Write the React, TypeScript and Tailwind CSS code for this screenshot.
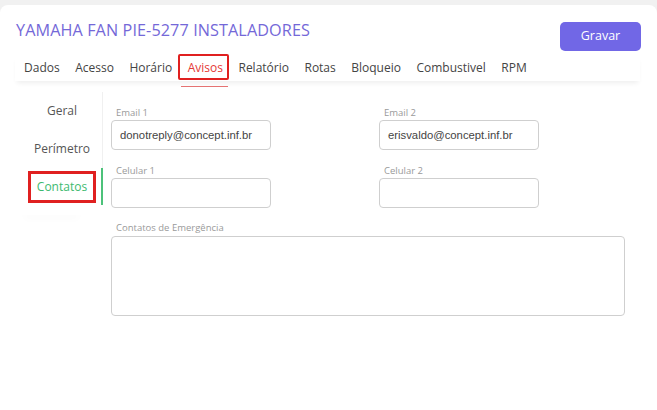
import React from "react";

const font = { fontFamily: '"Open Sans", "Noto Sans", sans-serif' };

export default function App() {
  const tabs = ["Dados", "Acesso", "Horário", "Avisos", "Relatório", "Rotas", "Bloqueio", "Combustivel", "RPM"];
  return (
    <div className="h-[410px] bg-[#f1f1f1] pt-[5px] overflow-hidden" style={font}>
      <div className="h-[405px] bg-white rounded-t-[8px]">
        <div className="flex items-start justify-between pl-4 pr-4 pt-[13px]">
          <h1 className="text-[16.2px] leading-[24px] text-[#7468d8] tracking-[0.1px]">YAMAHA FAN PIE-5277 INSTALADORES</h1>
          <button className="mt-[4px] w-[81px] h-[29px] rounded-[5px] bg-[#7167e6] text-white text-[12.5px]">Gravar</button>
        </div>
        <div className="mx-[15px] mr-[17px] mt-[4px] h-[26px] flex items-center pl-[9px] gap-[15.5px] shadow-[0_4px_5px_-2px_rgba(0,0,0,0.07)] text-[12px] text-[#444]">
          {tabs.map((t) =>
            t === "Avisos" ? (
              <span key={t} className="relative text-[#e53935]">
                <span className="absolute -left-[10px] -right-[6px] -top-[5px] -bottom-[3px] border-2 border-[#e02020] rounded-[2px]" />
                <span className="absolute -left-[7px] -right-[5px] -bottom-[10px] h-px bg-[#e57373]" />
                {t}
              </span>
            ) : (
              <span key={t}>{t}</span>
            )
          )}
        </div>
        <div className="flex mt-[10px]">
          <div className="w-[103px] pt-[1px] flex flex-col items-stretch">
            <div className="h-[38px] flex items-center justify-center text-[12px] text-[#555] pl-[22px] border-r border-[#f0f0f0]">Geral</div>
            <div className="h-[38px] flex items-center justify-center text-[12px] text-[#555] pl-[22px] border-r border-[#f0f0f0]">Perímetro</div>
            <div className="h-[37px] flex items-center pl-[28px] border-r-2 border-[#4cc27a]">
              <span className="w-[68px] h-[32px] flex items-center justify-center border-[3px] border-[#e02020] text-[12px] text-[#3dba6f]">Contatos</span>
            </div>
            <div className="h-[10px] mx-[20px] shadow-[0_6px_8px_-4px_rgba(0,0,0,0.06)]" />
          </div>
          <div className="pl-[8px] pt-[15px]">
            <div className="grid grid-cols-[268px_268px]">
              <Field label="Email 1" value="donotreply@concept.inf.br" />
              <Field label="Email 2" value="erisvaldo@concept.inf.br" />
              <Field label="Celular 1" value="" top />
              <Field label="Celular 2" value="" top />
            </div>
            <div className="mt-[13px]">
              <div className="text-[9.5px] leading-[13px] text-[#9a9a9a] pl-[5px]">Contatos de Emergência</div>
              <textarea className="mt-[2px] w-[514px] h-[80px] border border-[#cfcfcf] rounded-[4px] resize-none outline-none block" />
            </div>
          </div>
        </div>
      </div>
    </div>
  );
}

function Field({ label, value, top }: { label: string; value: string; top?: boolean }) {
  return (
    <div className={top ? "mt-[14px]" : ""}>
      <div className="text-[9.5px] leading-[13px] text-[#9a9a9a] pl-[5px]">{label}</div>
      <div
        className="mt-[1px] w-[160px] h-[30px] border border-[#cfcfcf] rounded-[4px] flex items-center pl-[8px] text-[11.3px] text-[#444]"
        style={{ fontFamily: '"Liberation Sans", Arial, sans-serif' }}
      >
        {value}
      </div>
    </div>
  );
}
